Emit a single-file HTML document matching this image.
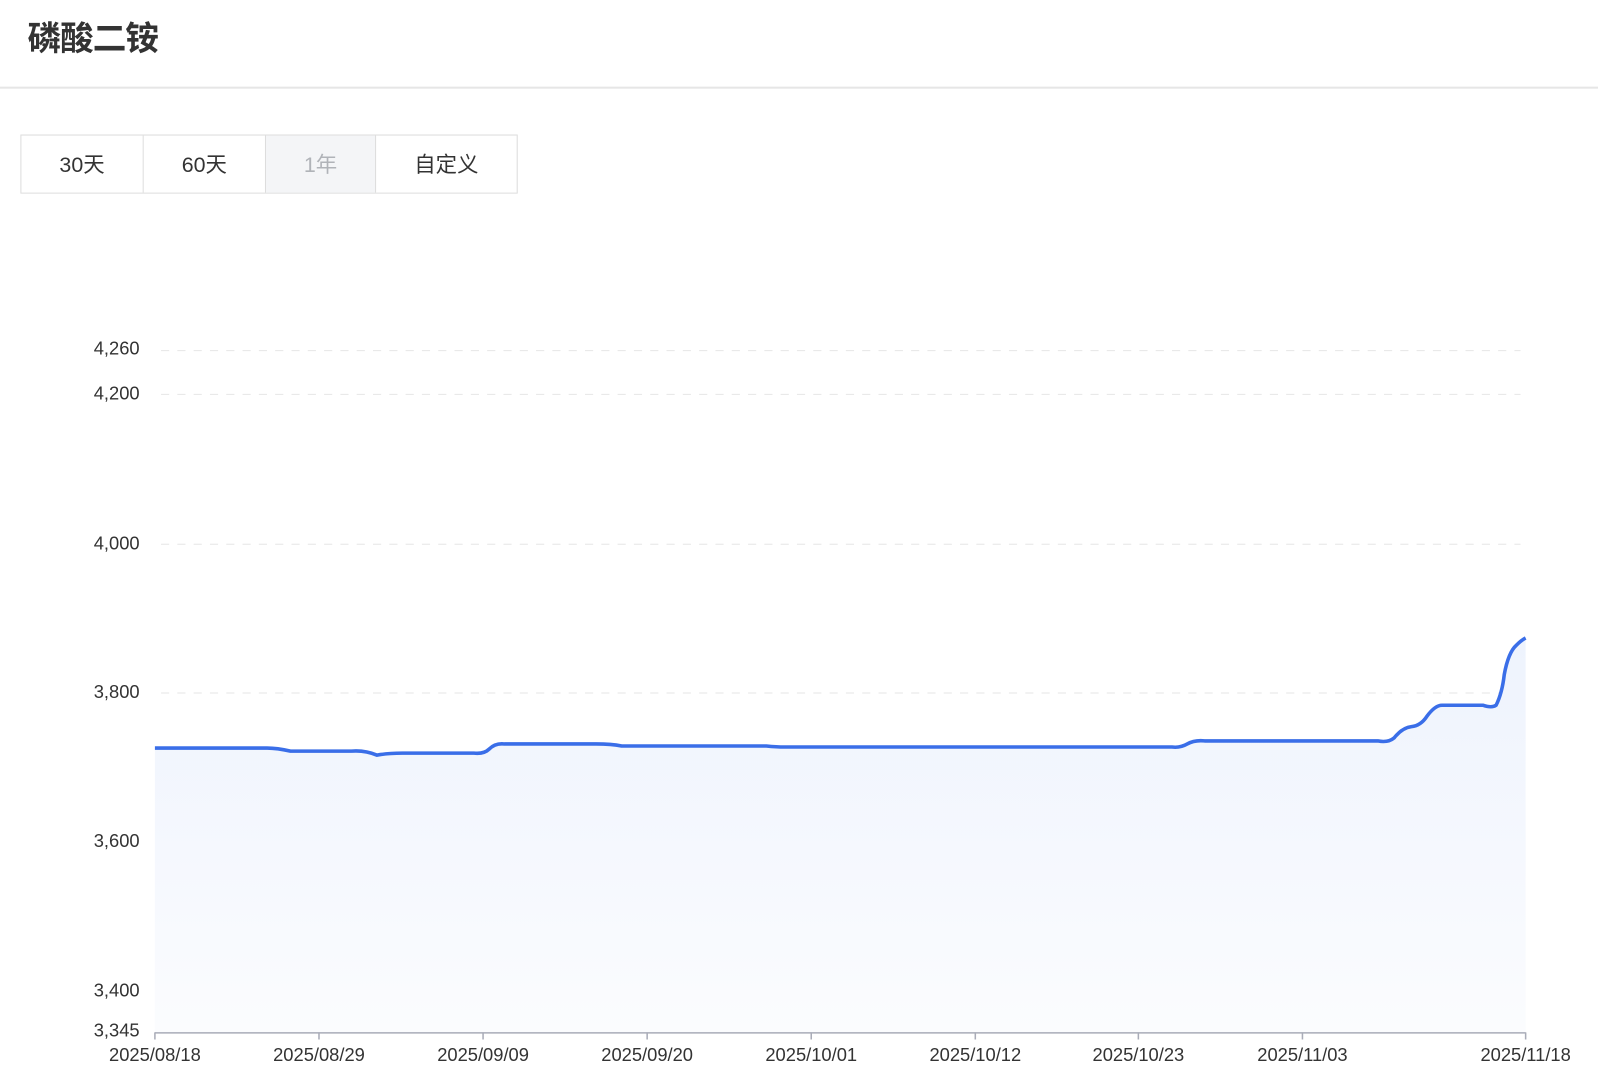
<!DOCTYPE html>
<html><head><meta charset="utf-8"><style>
body{margin:0;width:1598px;height:1080px;background:#fff;font-family:"Liberation Sans","Noto Sans CJK SC",sans-serif;position:relative;overflow:hidden}
#w{position:absolute;left:0;top:0;width:1568px;height:1060px;transform:scale(1.01913);transform-origin:0 0}
h1{position:absolute;left:27px;top:11px;margin:0;font-size:33px;font-weight:bold;color:#333;letter-spacing:-1px}
.hr{position:absolute;left:0;top:85px;width:1568px;height:2px;background:#e6e6e6}
.tabs{position:absolute;left:20px;top:132px;height:56px;display:flex;border:1px solid #ddd}
.tabs div{height:56px;line-height:60px;text-align:center;font-size:21px;color:#333;border-right:1px solid #ddd}
.tabs div:last-child{border-right:none}
</style></head><body><div id="w">
<h1>磷酸二铵</h1>
<div class="hr"></div>
<div class="tabs">
<div style="width:119px">30天</div>
<div style="width:119px">60天</div>
<div style="width:107px;background:#f4f5f7;color:#b0b3b8">1年</div>
<div style="width:138px">自定义</div>
</div>
<svg width="1568" height="1060" style="position:absolute;left:0;top:0" font-family="Liberation Sans, sans-serif" font-size="18" fill="#333">
<defs><linearGradient id="g" x1="0" y1="0" x2="0" y2="1"><stop offset="0" stop-color="#eef3fd"/><stop offset="1" stop-color="#fbfcfe"/></linearGradient></defs>
<g stroke="#e6e6e6" stroke-dasharray="8,8" stroke-width="1">
<line x1="158" y1="344" x2="1492" y2="344"/><line x1="158" y1="387" x2="1492" y2="387"/>
<line x1="158" y1="534" x2="1492" y2="534"/><line x1="158" y1="680" x2="1492" y2="680"/>
<line x1="158" y1="827" x2="1492" y2="827"/><line x1="158" y1="973" x2="1492" y2="973"/>
</g>
<g text-anchor="end">
<text x="137" y="348">4,260</text><text x="137" y="392">4,200</text><text x="137" y="539">4,000</text>
<text x="137" y="685">3,800</text><text x="137" y="831">3,600</text><text x="137" y="978">3,400</text><text x="137" y="1017">3,345</text>
</g>
<path d="M152,734 L262,734 Q272,734 285,737 L345,737 Q358,736 370,741 Q380,739 395,739 L465,739 Q475,740 480,735 Q486,729 495,730 L585,730 Q600,730 610,732 L752,732 Q762,733 770,733 L1150,733 Q1158,734 1165,730 Q1172,726 1182,727 L1352,727 Q1362,729 1368,724 Q1376,714 1385,713 Q1394,712 1400,703 Q1408,692 1415,692 L1455,692 Q1464,695 1468,692 Q1474,680 1476,662 Q1480,640 1488,633 Q1493,628 1497,626 L1497,1013 L152,1013 Z" fill="url(#g)"/>
<path d="M152,734 L262,734 Q272,734 285,737 L345,737 Q358,736 370,741 Q380,739 395,739 L465,739 Q475,740 480,735 Q486,729 495,730 L585,730 Q600,730 610,732 L752,732 Q762,733 770,733 L1150,733 Q1158,734 1165,730 Q1172,726 1182,727 L1352,727 Q1362,729 1368,724 Q1376,714 1385,713 Q1394,712 1400,703 Q1408,692 1415,692 L1455,692 Q1464,695 1468,692 Q1474,680 1476,662 Q1480,640 1488,633 Q1493,628 1497,626" fill="none" stroke="#3a6ee8" stroke-width="3.5"/>
<line x1="152" y1="1013.5" x2="1497" y2="1013.5" stroke="#a9acb8" stroke-width="1.5"/>
<g stroke="#a9acb8" stroke-width="1.5">
<line x1="152" y1="1013" x2="152" y2="1020"/><line x1="313" y1="1013" x2="313" y2="1020"/><line x1="474" y1="1013" x2="474" y2="1020"/>
<line x1="635" y1="1013" x2="635" y2="1020"/><line x1="796" y1="1013" x2="796" y2="1020"/><line x1="957" y1="1013" x2="957" y2="1020"/>
<line x1="1117" y1="1013" x2="1117" y2="1020"/><line x1="1278" y1="1013" x2="1278" y2="1020"/><line x1="1497" y1="1013" x2="1497" y2="1020"/>
</g>
<g text-anchor="middle">
<text x="152" y="1041">2025/08/18</text><text x="313" y="1041">2025/08/29</text><text x="474" y="1041">2025/09/09</text>
<text x="635" y="1041">2025/09/20</text><text x="796" y="1041">2025/10/01</text><text x="957" y="1041">2025/10/12</text>
<text x="1117" y="1041">2025/10/23</text><text x="1278" y="1041">2025/11/03</text><text x="1497" y="1041">2025/11/18</text>
</g>
</svg>
</div></body></html>
